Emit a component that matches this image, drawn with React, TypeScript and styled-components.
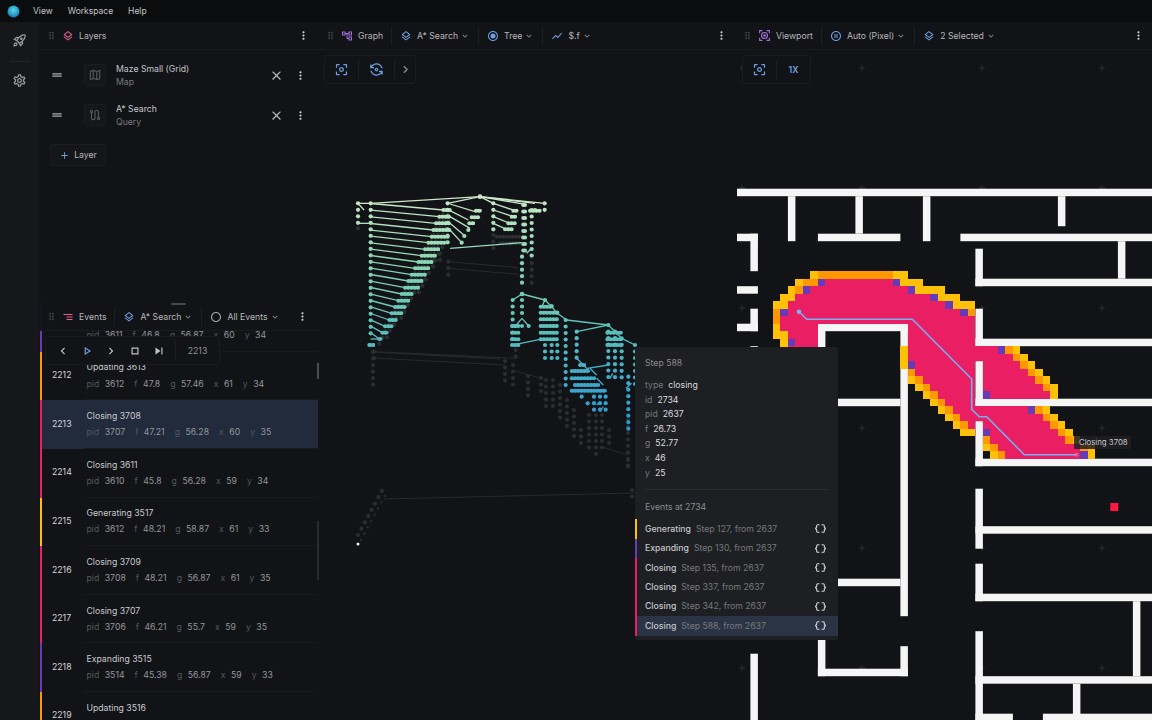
import React from "react";
import styled, { createGlobalStyle } from "styled-components";
import {
  MdAdd, MdChevronLeft, MdChevronRight, MdClose, MdDataObject, MdDragHandle, MdDragIndicator, MdExpandMore,
  MdMoreVert, MdOutlineAccountTree, MdOutlineCenterFocusWeak, MdOutlineCircle, MdOutlineFlipCameraAndroid,
  MdOutlineLayers, MdOutlineMap, MdOutlinePauseCircle, MdOutlinePlayArrow, MdOutlineRadioButtonChecked,
  MdOutlineRocketLaunch, MdOutlineRoute, MdOutlineSettings, MdOutlineStop, MdSegment, MdShowChart, MdSkipNext,
} from "react-icons/md";

const Global = createGlobalStyle`
  html, body { margin: 0; height: 100%; background: #121317; overflow: hidden; }
  body { font-family: Inter, "Noto Sans", sans-serif; color: #d6d7d9; -webkit-font-smoothing: antialiased; }
  #root { height: 100%; }
`;

const COL = { closing: "#e91e63", gen: "#ffc107", exp: "#673ab7", upd: "#ff9800" };
const BLUE = "#6d9fe0";

const Page = styled.div`width: 1152px; height: 720px; display: flex; flex-direction: column; position: relative; overflow: hidden;`;
const TopBar = styled.header`height: 22px; flex: none; background: #0b0c0e; display: flex; align-items: center; padding-left: 7px; font-size: 8.5px; color: #c4c5c8;`;
const Logo = styled.svg`width: 13px; height: 13px; margin-right: 13px;`;
const MenuItem = styled.span`margin-right: 15px;`;
const Body = styled.div`flex: 1; display: flex; min-height: 0;`;
const Sidebar = styled.nav`width: 39px; flex: none; background: #16171b; display: flex; flex-direction: column; align-items: center; padding-top: 11px; color: #9a9b9f;`;
const SideRule = styled.div`width: 20px; height: 1px; background: #25262b; margin: 13px 0 11px;`;
const LeftColumn = styled.div`width: 281px; flex: none; display: flex; flex-direction: column; position: relative; background: #121317;`;
const LayersPanel = styled.section`height: 281px; flex: none; position: relative;`;
const Header = styled.div<{ $pad?: number; $end?: number; $over?: boolean }>`
  height: 28px; box-sizing: border-box; display: flex; align-items: center; padding: 0 ${(p) => p.$end ?? 9}px 0 ${(p) => p.$pad ?? 7}px;
  border-bottom: 1px solid #1a1b1f; font-size: 8.7px; color: #b6b7ba; white-space: nowrap;
  ${(p) => p.$over && "position: absolute; top: 0; left: 0; right: 2px; z-index: 3; background: rgba(18,19,23,0.94);"}
`;
const Grip = styled(MdDragIndicator)`font-size: 11px; color: #45464b; margin-right: 5px; flex: none;`;
const HeadIcon = styled.span<{ $c: string; $gap?: number }>`display: inline-flex; color: ${(p) => p.$c}; font-size: 12px; margin-right: ${(p) => p.$gap ?? 5}px; flex: none;`;
const Chevron = styled(MdExpandMore)`font-size: 10px; color: #85868a; margin-left: 2px; flex: none;`;
const HeadRule = styled.i`width: 1px; height: 18px; background: #1e1f23; margin: 0 8px; flex: none;`;
const Spacer = styled.span`flex: 1;`;
const More = styled(MdMoreVert)`font-size: 13px; color: #c9cacc; flex: none;`;
const LayerList = styled.div`padding-top: 5px;`;
const LayerRow = styled.div`height: 40px; display: flex; align-items: center; padding-left: 11px; padding-right: 13px;`;
const LayerHandle = styled(MdDragHandle)`font-size: 14px; color: #a8a9ac; margin-right: 20px; flex: none;`;
const LayerThumb = styled.span`width: 22px; height: 22px; box-sizing: border-box; border: 1px solid #1b1c20; background: #15161a; border-radius: 2px; display: flex; align-items: center; justify-content: center; color: #55565a; font-size: 14px; margin-right: 10px; flex: none;`;
const LayerText = styled.div`flex: 1; display: flex; flex-direction: column; gap: 3px; padding-top: 1px; font-size: 8.7px; color: #c4c5c8;`;
const LayerSub = styled.span`color: #77787c;`;
const LayerClose = styled(MdClose)`font-size: 15px; color: #b5b6b9; margin-right: 10px; flex: none;`;
const AddButton = styled.button`
  margin: 9px 0 0 11px; width: 56px; height: 22px; box-sizing: border-box; background: #15161a; border: 1px solid #1b1c20; border-radius: 2px;
  display: flex; align-items: center; justify-content: center; gap: 4px; font: 8.7px Inter, sans-serif; color: #b5b6b9; padding: 0;
  svg { font-size: 11px; color: ${BLUE}; }
`;
const EventsPanel = styled.section`flex: 1; min-height: 0; position: relative; overflow: hidden;`;
const Handle = styled.i`position: absolute; left: 132px; top: 0; width: 15px; height: 2px; border-radius: 1px; background: #47484c; z-index: 4;`;
const EventList = styled.div`padding-left: 1px; padding-right: 2px;`;
const EventRow = styled.div<{ $c: string; $sel?: boolean }>`
  height: 48.65px; box-sizing: border-box; display: flex; align-items: center; position: relative;
  border-left: 2.6px solid ${(p) => p.$c}; background: ${(p) => (p.$sel ? "#212b3c" : "transparent")};
  &::after { content: ""; position: absolute; left: 42px; right: 0; bottom: 0; height: 1px; background: #191a1e; }
`;
const StepNo = styled.span`width: 44.5px; padding: 0 0 2px 10px; box-sizing: border-box; font-size: 8.7px; color: #d2d3d5; flex: none;`;
const EventBody = styled.div`display: flex; flex-direction: column; gap: 5.6px; font-size: 8.7px; color: #c9cacc; padding-top: 1px; margin-top: -2px;`;
const EventTitle = styled.span`min-height: 10.5px;`;
const Meta = styled.div`display: flex; gap: 10px; color: #94959a;`;
const MetaItem = styled.span`display: inline-flex; gap: 5.5px; b { font-weight: 400; color: #55575b; }`;
const Player = styled.div`position: absolute; left: 6px; top: 33px; width: 175px; height: 29px; box-sizing: border-box; border: 1px solid #1b1c20; border-radius: 3px; background: #121317; z-index: 2; display: flex; align-items: center; color: #c2c3c6;`;
const PlayerBtn = styled.span<{ $c?: string }>`width: 24px; display: flex; justify-content: center; font-size: 14px; color: ${(p) => p.$c ?? "inherit"}; flex: none;`;
const PlayerLead = styled.i`width: 5px; flex: none;`;
const PlayerRule = styled.i`width: 1px; height: 20px; background: #1e1f23; margin-left: 4px; flex: none;`;
const PlayerNum = styled.span`flex: 1; text-align: center; font-size: 8.7px; color: #8f9094;`;
const Thumb = styled.i<{ $top: number; $h: number; $c: string }>`position: absolute; right: 1px; top: ${(p) => p.$top}px; height: ${(p) => p.$h}px; width: 2px; background: ${(p) => p.$c}; z-index: 2;`;
const Panel = styled.section<{ $w: number }>`width: ${(p) => p.$w}px; flex: none; display: flex; flex-direction: column; background: #121317;`;
const Canvas = styled.div`flex: 1; min-height: 0; position: relative;`;
const FullSvg = styled.svg`display: block; width: 100%; height: 100%;`;
const Tools = styled.div<{ $x: number }>`position: absolute; left: ${(p) => p.$x}px; top: 5px; height: 29px; box-sizing: border-box; display: flex; align-items: center; background: #121317; border: 1px solid #1b1c20; border-radius: 3px; color: ${BLUE};`;
const Tool = styled.span<{ $w: number; $grey?: boolean; $text?: boolean }>`
  width: ${(p) => p.$w}px; height: 19px; display: flex; align-items: center; justify-content: center; font-size: ${(p) => (p.$text ? 8.7 : 15)}px; font-weight: ${(p) => (p.$text ? 600 : 400)};
  color: ${(p) => (p.$grey ? "#8d8e92" : "inherit")};
  & + & { border-left: 1px solid #1e1f23; }
`;
const Tip = styled.aside`position: absolute; left: 635px; top: 347px; width: 203px; height: 293px; box-sizing: border-box; background: #1e1f23; border-radius: 2px; z-index: 5; font-size: 8.7px; display: flex; flex-direction: column; padding-top: 11px;`;
const TipHead = styled.div`padding-left: 10px; color: #8a8b8f; height: 10px; line-height: 10px;`;
const TipFields = styled.div`padding: 10px 10px 0; display: flex; flex-direction: column;`;
const TipField = styled.div`height: 14.6px; line-height: 14.6px; display: flex; gap: 5px; color: #dadbdd; b { font-weight: 400; color: #77787c; }`;
const TipRule = styled.hr`margin: 9px 10px 12px; border: 0; height: 1px; background: #2a2b30;`;
const TipEvents = styled.div`margin-top: 7px; display: flex; flex-direction: column;`;
const TipEvent = styled.div<{ $c: string; $sel?: boolean }>`
  height: 19.4px; box-sizing: border-box; padding: 0 11px 0 8px; display: flex; align-items: center; gap: 5px; border-left: 2px solid ${(p) => p.$c};
  color: #c6c7ca; font-weight: 500; background: ${(p) => (p.$sel ? "#2b3445" : "transparent")};
  span { font-weight: 400; color: #77787c; flex: 1; }
  svg { font-size: 13px; color: #d4d5d7; }
`;
const Label = styled.div`position: absolute; left: 337px; top: 386px; width: 57px; height: 13px; line-height: 13px; box-sizing: border-box; padding-left: 5px; background: rgba(30,31,35,0.85); color: #c8c9cb; font-size: 7.8px; border-radius: 1px; white-space: nowrap;`;

/* ---------- maze ---------- */
const CELL = 7.5, MX = -1.6, MY = 138.7;
const WALLS: number[][] = [
  [0,0,56,1],[7,1,1,6],[16,1,1,5],[11,6,11,1],[25,1,1,6],[43,1,1,4],[30,6,26,1],[51,7,1,5],[32,8,1,5],[32,12,24,1],
  [0,6,3,1],[2,6,1,5],[0,13,3,1],[2,16,1,3],[0,18,3,1],[2,21,1,6],[11,18,12,1],[11,18,1,6],[22,18,1,39],
  [32,16,1,5],[32,20,24,1],[32,23,1,6],[32,28,24,1],[32,31,1,6],[32,36,24,1],[11,28,11,1],
  [32,40,1,8],[32,45,24,1],[32,50,1,5],[32,54,24,1],[53,55,1,10],[32,59,1,12],[32,65,24,1],[45,66,1,5],[32,70,5,1],[41,70,15,1],
  [10,52,12,1],[22,61,1,4],[11,64,12,1],[11,59,1,6],[2,62,1,9],
];
const FILL: Record<string, string> = { a: "#ffc107", o: "#ff9800", p: "#e91e63", v: "#673ab7" };
const PAINT: Record<number, string> = {
  11:"a10 o11-20 a21-22",12:"a8 o9-10 v11 p12-20 v21 a22-24",13:"a7 o8 v9 p10-22 v23 a24-27",14:"a6-7 p8-25 v26 a27-29",
  15:"a5-6 p7-27 v28 a29-31",16:"o5 v6 p7-29 v30 o31",17:"o5 p6-31",18:"a5 p6-10 p23-31",19:"a5-6 p7-10 p23-31",20:"a6 v7 p8-10 p23-31",
  21:"a6 p7-10 a22 p23-34 v35 o36 a37",22:"a22 p23-36 o37 a38",23:"a22 v23 p24-31 p33-37 o38 a39",24:"o23 p24-31 p33-38 o39 a40",
  25:"a23 o24 p25-31 p33-39 o40 a41",26:"a24 o25 p26-31 p33-40 o41 a42",27:"a25 o26 p27-31 v33 p34-41 a42",28:"a26 o27 p28-31",
  29:"a27 o28 p29-38 v39 o40 a41",30:"a28 o29 p30-40 o41 a42",31:"a29 o30 p31 p33-41 o42 a43",32:"a30-31 v33 p34-42 o43 a44",
  33:"o33 p34-43 o44 a45",34:"a33 o34 p35-45 o46 a47",35:"a34 o35 p36-45 v46 a47",
};
function paintCells() {
  const out: React.ReactNode[] = [];
  for (const [j, s] of Object.entries(PAINT)) {
    for (const tok of s.split(" ")) {
      const c = FILL[tok[0]];
      const [a, b] = tok.slice(1).split("-").map(Number);
      const n = (b ?? a) - a + 1;
      out.push(<rect key={j + tok} x={MX + a * CELL} y={MY + +j * CELL} width={n * CELL} height={CELL} fill={c} />);
    }
  }
  return out;
}
const crosses: [number, number][] = [];
for (const x of [5, 125, 245, 365]) for (const y of [18, 138, 258, 378, 498, 618]) crosses.push([x, y]);

function Maze() {
  return (
    <FullSvg viewBox="0 0 415 670">
      {crosses.map(([x, y]) => (
        <path key={`${x}-${y}`} d={`M${x - 3} ${y}h6M${x} ${y - 3}v6`} stroke="#2d2e33" strokeWidth="1" />
      ))}
      {WALLS.map(([i, j, w, h], k) => (
        <rect key={k} x={MX + i * CELL} y={MY + j * CELL} width={w * CELL} height={h * CELL} fill="#f5f5f5" />
      ))}
      <g shapeRendering="crispEdges">{paintCells()}</g>
      <rect x={373.3} y={453} width={8} height={8} fill="#ff1744" />
      <path d="M62 261.7 69.7 269.3H175.3L234.7 329V359.3L242.3 366.7H249.7L287.3 404.7H339.7" fill="none" stroke="#78aef2" strokeWidth="1.6" />
      <circle cx="62" cy="261.7" r="2.3" fill="#7ab4f2" />
      <circle cx="339.7" cy="404.7" r="1.5" fill="none" stroke="#d88ac0" strokeWidth="0.8" />
    </FullSvg>
  );
}

/* ---------- search tree ---------- */
type Mark = { k: "l" | "d"; a: number; b: number; c?: number; d?: number; g?: boolean; r?: number; w?: number };
const marks: Mark[] = [];
const tone = (y: number) => {
  const stops: [number, number[]][] = [[196,[205,232,200]],[262,[135,214,178]],[330,[92,192,186]],[400,[52,162,210]],[440,[40,140,205]]];
  for (let i = 1; i < stops.length; i++) {
    if (y <= stops[i][0]) {
      const t = Math.max(0, (y - stops[i - 1][0]) / (stops[i][0] - stops[i - 1][0]));
      const m = stops[i - 1][1].map((v, n) => Math.round(v + (stops[i][1][n] - v) * t));
      return `rgb(${m.join(",")})`;
    }
  }
  return "rgb(40,140,205)";
};
const L = (a: number, b: number, c: number, d: number, g = false, w = 1.3) => marks.push({ k: "l", a, b, c, d, g, w });
const D = (a: number, b: number, g = false, r = 2.1) => marks.push({ k: "d", a, b, g, r });
const col = (x: number, y0: number, y1: number, g = false, s = 6.5) => { for (let y = y0; y <= y1 + 0.1; y += s) D(x, y, g); };
const bar = (x0: number, x1: number, y: number, g = false) => {
  L(x0, y, x1, y, g, 3);
  for (let x = x0; x <= x1; x += 3.2) D(x, y, g, 2);
};
const a6 = (x: number, y: number): [number, number] => [350 + x / 3, 190 + y / 3];
const a7 = (x: number, y: number): [number, number] => [500 + x / 3, 290 + y / 3];
const L6 = (a: number, b: number, c: number, d: number, g = false) => { const p = a6(a, b), q = a6(c, d); L(p[0], p[1], q[0], q[1], g); };
const L7 = (a: number, b: number, c: number, d: number, g = false) => { const p = a7(a, b), q = a7(c, d); L(p[0], p[1], q[0], q[1], g); };
const C6 = (x: number, a: number, b: number, g = false) => col(a6(x, 0)[0], a6(0, a)[1], a6(0, b)[1], g);
const C7 = (x: number, a: number, b: number, g = false) => col(a7(x, 0)[0], a7(0, a)[1], a7(0, b)[1], g);
const B6 = (a: number, b: number, y: number, g = false) => bar(a6(a, 0)[0], a6(b, 0)[0], a6(0, y)[1], g);
const B7 = (a: number, b: number, y: number, g = false) => bar(a7(a, 0)[0], a7(b, 0)[0], a7(0, y)[1], g);

const ladder = [[60,280,300],[80,268,300],[100,258,300],[120,250,300],[140,245,295],[158,235,285],[178,225,270],[197,215,260],[216,205,250],[235,195,240],[254,185,230],[273,175,220],[293,165,210],[312,155,190],[332,145,180],[351,135,165],[370,125,155],[390,118,140],[409,105,125],[428,97,115],[447,88,97]];
// faint layers first
ladder.forEach(([y, a, b]) => { for (let x = a; x < b; x += 14) { C6(x, y + 14, y + 24, true); } });
C6(24, 115, 120, true); C6(72, 485, 505, true);
L6(72, 485, 500, 505, true); L6(295, 215, 505, 233, true); L6(295, 235, 505, 253, true);
C6(295, 215, 255, true); C6(430, 135, 190, true); B6(440, 520, 140, true); B6(450, 510, 160, true); C6(545, 200, 290, true); C6(497, 480, 510, true);
C6(270, 190, 220, true); C6(250, 210, 230, true);
L(373, 352, 500, 359, true); L(374, 358, 505, 365, true);
col(505, 361, 385, true); col(513, 365, 385, true); L(512, 370, 540, 378, true); col(541, 378, 395, true); col(528, 376, 400, true); col(373, 352, 385, true);
for (const [x, a, b] of [[546,380,410],[553,380,412],[560,385,420],[567,400,430],[574,410,440],[581,430,445],[589,415,452],[596,415,455],[602,415,450],[609,430,445],[628,460,468],[628,420,470]] as number[][]) col(x, a, b, true);
L(602, 447, 628, 455, true);
for (let i = 0; i < 8; i++) { col(358 + i * 3.4, 535 - i * 6.3, 541 - i * 6.3, true); D(361 + i * 3.4, 540 - i * 6.3, true, 1.2); }
L(384, 499, 635, 493, true); col(632, 490, 497, true);

// top fan
for (const p of [[293,40],[62,40],[430,40],[525,43],[584,40],[555,40]]) L6(390, 20, p[0], p[1]);
L6(24, 40, 62, 40); L6(24, 40, 42, 60); C6(24, 40, 100); D(...a6(390, 20), false, 2.3);
C6(62, 40, 445); L6(24, 100, 62, 100);
ladder.forEach(([y, a, b]) => { L6(62, y - 19.5, a, y); B6(a, b, y); });
L6(62, 447, 92, 447); D(...a6(58, 465)); B6(60, 75, 465);
C6(293, 40, 175);
const fan = [[42,375,65],[62,355,90],[80,360,115],[100,345,138],[120,335,158]];
fan.forEach(([y, x, e]) => { L6(300, y, x, e); });
B6(378, 395, 62); B6(365, 385, 82); B6(358, 375, 100); D(...a6(355, 120)); D(...a6(343, 138)); D(...a6(335, 158));
C6(430, 40, 120);
[[40,495,62],[60,490,80],[80,480,100],[100,470,118]].forEach(([y, x, e]) => L6(430, y, x, e));
B6(490, 500, 62); B6(485, 500, 80); B6(475, 498, 100); B6(465, 490, 118);
C6(520, 45, 200); C6(525, 45, 200); C6(545, 60, 197); C6(555, 60, 60); B6(540, 570, 62); C6(584, 40, 62);
L6(530, 190, 545, 175); C6(516, 200, 295);
L6(300, 175, 515, 158);
// second tree
D(...a7(66, 12), false, 2.3);
L7(66, 12, 38, 30); L7(66, 12, 135, 30); C7(38, 30, 165); C7(66, 30, 85); L7(66, 85, 46, 108); L7(66, 85, 86, 108); D(...a7(46, 108)); D(...a7(66, 108)); D(...a7(86, 108));
[108,128,148,165].forEach((y) => B7(36, 56, y));
[[135,30,155,50],[155,50,172,70],[172,70,200,90],[200,90,325,105],[325,105,345,125],[345,125,365,145],[365,145,405,165],[230,125,325,105],[262,235,325,225],[48,163,120,148],[135,30,125,50]].forEach(([a, b, c, d]) => L7(a, b, c, d));
D(...a7(135, 30)); D(...a7(155, 48)); D(...a7(172, 68));
B7(122, 160, 50);
[68,88,108,128,148].forEach((y) => B7(122, 175, y));
[[135,165,205],[155,165,205],[172,165,205]].forEach(([x, a, b]) => C7(x, a, b));
C7(197, 90, 285); C7(230, 125, 205);
[[230,205],[250,225],[270,235],[290,265]].forEach(([x, y]) => L7(x, y, x + 20, y + 20));
B7(240, 258, 225); B7(215, 265, 243); B7(215, 285, 265); B7(215, 320, 302); B7(225, 300, 285);
C7(245, 320, 320); C7(263, 340, 340); C7(282, 320, 360); C7(300, 320, 378); C7(317, 320, 378);
C7(325, 105, 280); C7(345, 125, 280); C7(365, 145, 280); C7(385, 260, 435); C7(405, 165, 285);
[128,148,165].forEach((y) => B7(322, 368, y));
[[338,250,330,265],[378,295,395,280],[290,345,300,335],[300,365,310,350]].forEach(([a, b, c, d]) => L7(a, b, c, d));

function Tree() {
  return (
    <FullSvg viewBox="320 50 417 670">
      {marks.map((m, i) => {
        const c = m.g ? "#2b2d31" : tone(m.b);
        return m.k === "l" ? (
          <line key={i} x1={m.a} y1={m.b} x2={m.c} y2={m.d} stroke={c} strokeWidth={m.g ? Math.min(m.w ?? 1, 0.9) : m.w} />
        ) : (
          <circle key={i} cx={m.a} cy={m.b} r={m.r} fill={c} />
        );
      })}
      <circle cx="358" cy="544" r="1.5" fill="#e6f5dc" />
    </FullSvg>
  );
}

const Ev = ({ n, title, c, sel, m }: { n?: number; title?: string; c: string; sel?: boolean; m: (string | number)[] }) => (
  <EventRow $c={c} $sel={sel}>
    <StepNo>{n}</StepNo>
    <EventBody>
      <EventTitle>{title}</EventTitle>
      <Meta>
        {["pid", "f", "g", "x", "y"].map((l, i) => (
          <MetaItem key={l}><b>{l}</b>{m[i]}</MetaItem>
        ))}
      </Meta>
    </EventBody>
  </EventRow>
);

const LogoMark = () => (
  <Logo viewBox="0 0 13 13">
    <defs>
      <radialGradient id="lg" cx="0.5" cy="0.4" r="0.62">
        <stop offset="0" stopColor="#63d6dc" />
        <stop offset="0.55" stopColor="#2ea6d2" />
        <stop offset="1" stopColor="#1a6fa8" />
      </radialGradient>
    </defs>
    <circle cx="6.5" cy="6.5" r="6" fill="url(#lg)" />
  </Logo>
);

const ViewportGlyph = () => (
  <svg width="13" height="13" viewBox="0 0 24 24" fill="none" stroke="currentColor" strokeWidth="2">
    <path d="M3 8V3h5M16 3h5v5M21 16v5h-5M8 21H3v-5" />
    <circle cx="12" cy="12" r="5.5" />
    <circle cx="12" cy="12" r="1.5" fill="currentColor" />
  </svg>
);

const steps: [string, string, string][] = [
  ["Generating", "Step 127, from 2637", COL.gen],
  ["Expanding", "Step 130, from 2637", COL.exp],
  ["Closing", "Step 135, from 2637", COL.closing],
  ["Closing", "Step 337, from 2637", COL.closing],
  ["Closing", "Step 342, from 2637", COL.closing],
  ["Closing", "Step 588, from 2637", COL.closing],
];

export default function App() {
  return (
    <Page>
      <Global />
      <TopBar>
        <LogoMark />
        <MenuItem>View</MenuItem>
        <MenuItem>Workspace</MenuItem>
        <MenuItem>Help</MenuItem>
      </TopBar>
      <Body>
        <Sidebar>
          <MdOutlineRocketLaunch size={15} />
          <SideRule />
          <MdOutlineSettings size={15} />
        </Sidebar>
        <LeftColumn>
          <LayersPanel>
            <Header $end={10}>
              <Grip />
              <HeadIcon $c="#e0648f"><MdOutlineLayers /></HeadIcon>
              Layers
              <Spacer />
              <More />
            </Header>
            <LayerList>
              <LayerRow>
                <LayerHandle />
                <LayerThumb><MdOutlineMap /></LayerThumb>
                <LayerText>Maze Small (Grid)<LayerSub>Map</LayerSub></LayerText>
                <LayerClose />
                <More />
              </LayerRow>
              <LayerRow>
                <LayerHandle />
                <LayerThumb><MdOutlineRoute /></LayerThumb>
                <LayerText>A* Search<LayerSub>Query</LayerSub></LayerText>
                <LayerClose />
                <More />
              </LayerRow>
              <AddButton><MdAdd />Layer</AddButton>
            </LayerList>
          </LayersPanel>
          <EventsPanel>
            <Handle />
            <Header $over>
              <Grip />
              <HeadIcon $c="#e0648f"><MdSegment /></HeadIcon>
              Events
              <HeadRule />
              <HeadIcon $c={BLUE}><MdOutlineLayers /></HeadIcon>
              A* Search<Chevron />
              <HeadRule />
              <HeadIcon $c="#a8a9ac"><MdOutlineCircle /></HeadIcon>
              All Events<Chevron />
              <Spacer />
              <More />
            </Header>
            <Player>
              <PlayerLead />
              <PlayerBtn><MdChevronLeft /></PlayerBtn>
              <PlayerBtn $c={BLUE}><MdOutlinePlayArrow /></PlayerBtn>
              <PlayerBtn><MdChevronRight /></PlayerBtn>
              <PlayerBtn><MdOutlineStop /></PlayerBtn>
              <PlayerBtn><MdSkipNext /></PlayerBtn>
              <PlayerRule />
              <PlayerNum>2213</PlayerNum>
            </Player>
            <Thumb $top={60} $h={16} $c="#4c4d52" />
            <Thumb $top={218} $h={59} $c="#2a2b2f" />
            <EventList>
              <Ev c={COL.exp} m={[3611, 46.8, 56.87, 60, 34]} />
              <Ev n={2212} title="Updating 3613" c={COL.upd} m={[3612, 47.8, 57.46, 61, 34]} />
              <Ev n={2213} title="Closing 3708" c={COL.closing} sel m={[3707, 47.21, 56.28, 60, 35]} />
              <Ev n={2214} title="Closing 3611" c={COL.closing} m={[3610, 45.8, 56.28, 59, 34]} />
              <Ev n={2215} title="Generating 3517" c={COL.gen} m={[3612, 48.21, 58.87, 61, 33]} />
              <Ev n={2216} title="Closing 3709" c={COL.closing} m={[3708, 48.21, 56.87, 61, 35]} />
              <Ev n={2217} title="Closing 3707" c={COL.closing} m={[3706, 46.21, 55.7, 59, 35]} />
              <Ev n={2218} title="Expanding 3515" c={COL.exp} m={[3514, 45.38, 56.87, 59, 33]} />
              <Ev n={2219} title="Updating 3516" c={COL.upd} m={[3515, 46.38, 57.46, 60, 33]} />
            </EventList>
          </EventsPanel>
        </LeftColumn>
        <Panel $w={417}>
          <Header $pad={5}>
            <Grip />
            <HeadIcon $c="#a070d8"><MdOutlineAccountTree /></HeadIcon>
            Graph
            <HeadRule />
            <HeadIcon $c={BLUE}><MdOutlineLayers /></HeadIcon>
            A* Search<Chevron />
            <HeadRule />
            <HeadIcon $c={BLUE}><MdOutlineRadioButtonChecked /></HeadIcon>
            Tree<Chevron />
            <HeadRule />
            <HeadIcon $c={BLUE}><MdShowChart /></HeadIcon>
            $.f<Chevron />
            <Spacer />
            <More />
          </Header>
          <Canvas>
            <Tree />
            <Tools $x={4}>
              <Tool $w={33}><MdOutlineCenterFocusWeak /></Tool>
              <Tool $w={35}><MdOutlineFlipCameraAndroid /></Tool>
              <Tool $w={20} $grey><MdChevronRight /></Tool>
            </Tools>
          </Canvas>
        </Panel>
        <Panel $w={415}>
          <Header $pad={5} $end={7}>
            <Grip />
            <HeadIcon $c="#a070d8"><ViewportGlyph /></HeadIcon>
            Viewport
            <HeadRule />
            <HeadIcon $c={BLUE}><MdOutlinePauseCircle /></HeadIcon>
            Auto (Pixel)<Chevron />
            <HeadRule />
            <HeadIcon $c={BLUE}><MdOutlineLayers /></HeadIcon>
            2 Selected<Chevron />
            <Spacer />
            <More />
          </Header>
          <Canvas>
            <Maze />
            <Tools $x={5}>
              <Tool $w={33}><MdOutlineCenterFocusWeak /></Tool>
              <Tool $w={33} $text>1X</Tool>
            </Tools>
            <Label>Closing 3708</Label>
          </Canvas>
        </Panel>
      </Body>
      <Tip>
        <TipHead>Step 588</TipHead>
        <TipFields>
          <TipField><b>type</b>closing</TipField>
          <TipField><b>id</b>2734</TipField>
          <TipField><b>pid</b>2637</TipField>
          <TipField><b>f</b>26.73</TipField>
          <TipField><b>g</b>52.77</TipField>
          <TipField><b>x</b>46</TipField>
          <TipField><b>y</b>25</TipField>
        </TipFields>
        <TipRule />
        <TipHead>Events at 2734</TipHead>
        <TipEvents>
          {steps.map(([a, b, c], i) => (
            <TipEvent key={b} $c={c} $sel={i === 5}>
              {a}<span>{b}</span><MdDataObject />
            </TipEvent>
          ))}
        </TipEvents>
      </Tip>
    </Page>
  );
}
